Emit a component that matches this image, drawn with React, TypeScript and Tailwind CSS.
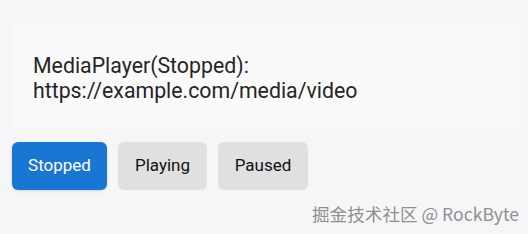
export default function App() {
  return (
    <div className="h-[234px] w-[528px] bg-[#f6f6f9] pt-[25px] pl-3 pr-2 font-['Roboto',sans-serif]">
      <div className="h-[104px] bg-[#fafafa] px-[21px] pt-[28px] text-[21.3px] leading-[25px] text-[#252525]">
        <div>MediaPlayer(Stopped):</div>
        <div>https://example.com/media/video</div>
      </div>
      <div className="mt-[13px] flex gap-[11px] text-[17px]">
        <button className="h-12 w-[95px] rounded-md bg-[#1976d2] text-white shadow-sm">Stopped</button>
        <button className="h-12 w-[89px] rounded-md bg-[#e0e0e0] text-[#111]">Playing</button>
        <button className="h-12 w-[90px] rounded-md bg-[#e0e0e0] text-[#111]">Paused</button>
      </div>
      <div className="mt-[12px] pr-[1px] text-right text-[17.6px] leading-[24px] text-[#8f8f8f] font-['Noto_Sans_CJK_SC',sans-serif]">
        掘金技术社区 @ RockByte
      </div>
    </div>
  );
}
